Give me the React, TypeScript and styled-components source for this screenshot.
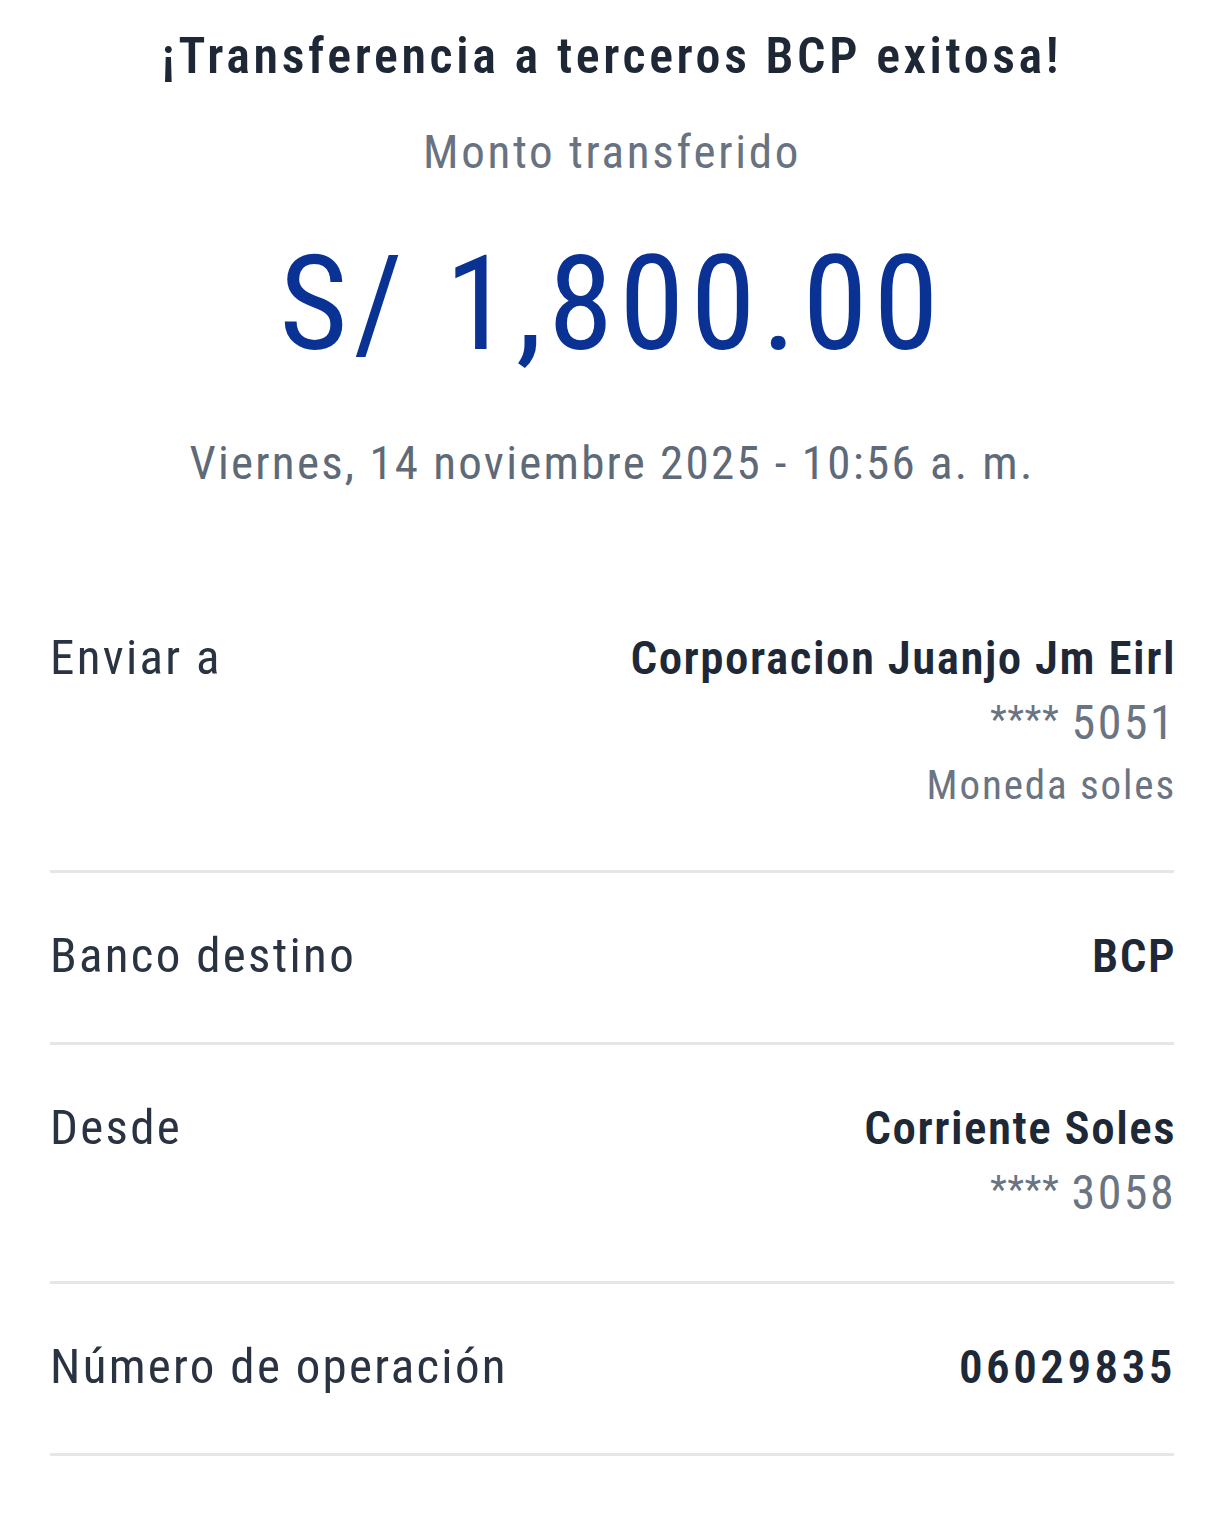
import React from "react";
import styled, { createGlobalStyle } from "styled-components";

const GlobalStyle = createGlobalStyle`
  html, body { margin: 0; padding: 0; background: #ffffff; }
  body { font-family: "Roboto Condensed", Roboto, "Liberation Sans", sans-serif; -webkit-font-smoothing: antialiased; }
`;

const Page = styled.main`
  width: 1224px;
  min-height: 1516px;
  box-sizing: border-box;
  padding: 26px 50px 0;
  display: flex;
  flex-direction: column;
`;

const Header = styled.section`
  display: flex;
  flex-direction: column;
  align-items: center;
  text-align: center;
`;

const Title = styled.h1`
  margin: 0;
  font-size: 50px;
  line-height: 60px;
  font-weight: 600;
  letter-spacing: 3.6px;
  color: #1d2735;
  white-space: nowrap;
`;

const Subtitle = styled.p`
  margin: 38px 0 0;
  font-size: 47px;
  line-height: 56px;
  font-weight: 400;
  letter-spacing: 2.7px;
  color: #687281;
`;

const Amount = styled.p`
  margin: 49px 0 0;
  font-size: 132px;
  line-height: 150px;
  font-weight: 400;
  letter-spacing: 6px;
  color: #0a3294;
`;

const DateText = styled.p`
  margin: 56px 0 0;
  font-size: 47px;
  line-height: 56px;
  font-weight: 400;
  letter-spacing: 2.25px;
  color: #5f6a79;
  white-space: nowrap;
`;

const Details = styled.section`
  margin-top: 84px;
  display: flex;
  flex-direction: column;
`;

const Row = styled.div`
  display: flex;
  justify-content: space-between;
  align-items: flex-start;
  padding: 53px 0 56px;
  border-bottom: 3px solid #e6e6e6;
`;

const Label = styled.span`
  font-size: 49px;
  line-height: 60px;
  font-weight: 400;
  letter-spacing: 2.3px;
  color: #2a3342;
  white-space: nowrap;
`;

const Values = styled.div`
  display: flex;
  flex-direction: column;
  align-items: flex-end;
  text-align: right;
  margin-right: -2px;
`;

const Primary = styled.span<{ $numeric?: boolean }>`
  font-size: 47px;
  line-height: 60px;
  font-weight: 600;
  letter-spacing: ${(p) => (p.$numeric ? "3.5px" : "1.5px")};
  color: #1e2836;
  white-space: nowrap;
`;

const Secondary = styled.span<{ $small?: boolean }>`
  margin-top: ${(p) => (p.$small ? "2px" : "0")};
  font-size: ${(p) => (p.$small ? "41px" : "48px")};
  line-height: ${(p) => (p.$small ? "57px" : "65px")};
  font-weight: 400;
  letter-spacing: ${(p) => (p.$small ? "1.9px" : "2.4px")};
  color: #6a7482;
  white-space: nowrap;
`;

const Stars = styled.span`
  font-size: 38px;
  letter-spacing: 1px;
  vertical-align: 6px;
  margin-right: 12px;
`;

type Detail = {
  label: string;
  value: string;
  numeric?: boolean;
  account?: string;
  note?: string;
};

const details: Detail[] = [
  { label: "Enviar a", value: "Corporacion Juanjo Jm Eirl", account: "5051", note: "Moneda soles" },
  { label: "Banco destino", value: "BCP" },
  { label: "Desde", value: "Corriente Soles", account: "3058" },
  { label: "Número de operación", value: "06029835", numeric: true },
];

export default function App() {
  return (
    <>
      <GlobalStyle />
      <Page>
        <Header>
          <Title>¡Transferencia a terceros BCP exitosa!</Title>
          <Subtitle>Monto transferido</Subtitle>
          <Amount>S/ 1,800.00</Amount>
          <DateText>Viernes, 14 noviembre 2025 - 10:56 a. m.</DateText>
        </Header>
        <Details>
          {details.map((d) => (
            <Row key={d.label}>
              <Label>{d.label}</Label>
              <Values>
                <Primary $numeric={d.numeric}>{d.value}</Primary>
                {d.account && (
                  <Secondary>
                    <Stars>****</Stars>
                    {d.account}
                  </Secondary>
                )}
                {d.note && <Secondary $small>{d.note}</Secondary>}
              </Values>
            </Row>
          ))}
        </Details>
      </Page>
    </>
  );
}
